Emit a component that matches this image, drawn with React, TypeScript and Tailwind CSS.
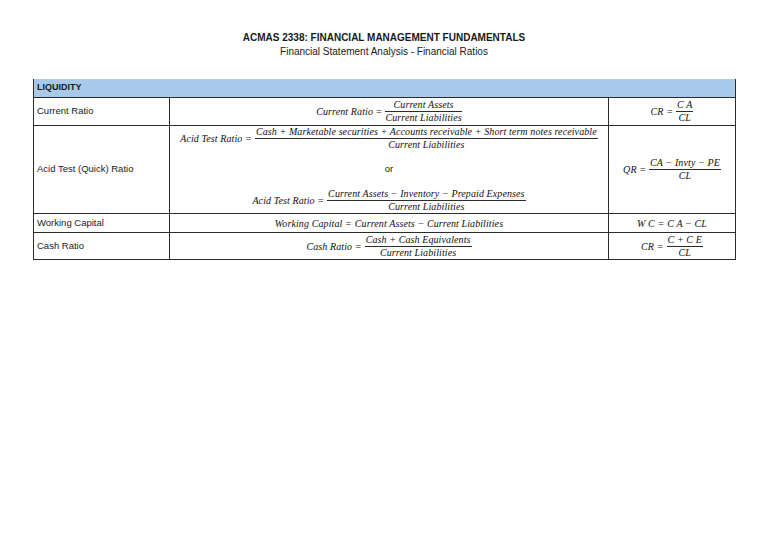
import React from 'react';

// Financial ratios sheet – liquidity table

const sans = { fontFamily: '"Liberation Sans", Arial, sans-serif' };
const math = { fontFamily: '"Liberation Serif", "Times New Roman", serif' };

const Frac: React.FC<{ num: string; den: string }> = ({ num, den }) => (
    <span className="inline-flex flex-col items-center">
        <span className="px-[1px] leading-[10px] whitespace-nowrap">{num}</span>
        <span className="my-[1px] h-px w-full bg-[#2b2b2b]" />
        <span className="leading-[10px] whitespace-nowrap">{den}</span>
    </span>
);

const Formula: React.FC<{ lhs: string; num?: string; den?: string; rhs?: string }> = ({ lhs, num, den, rhs }) => (
    <span className="inline-flex items-center gap-[3px] italic text-[10px] tracking-[0.1px] text-[#111]" style={math}>
        <span className="whitespace-nowrap">{lhs} =</span>
        {num && den ? <Frac num={num} den={den} /> : <span className="whitespace-nowrap">{rhs}</span>}
    </span>
);

interface Row {
    label: string;
    height: string;
    main: React.ReactNode;
    short: React.ReactNode;
}

const rows: Row[] = [
    {
        label: 'Current Ratio',
        height: 'h-[28px]',
        main: <Formula lhs="Current Ratio" num="Current Assets" den="Current Liabilities" />,
        short: <Formula lhs="CR" num="C A" den="CL" />,
    },
    {
        label: 'Acid Test (Quick) Ratio',
        height: 'h-[88px]',
        main: (
            <div className="flex h-full flex-col items-center justify-between py-[1px]">
                <Formula
                    lhs="Acid Test Ratio"
                    num="Cash + Marketable securities + Accounts receivable + Short term notes receivable"
                    den="Current Liabilities"
                />
                <span className="text-[9.5px] text-[#222]" style={sans}>or</span>
                <Formula
                    lhs="Acid Test Ratio"
                    num="Current Assets  −  Inventory  −  Prepaid Expenses"
                    den="Current Liabilities"
                />
            </div>
        ),
        short: <Formula lhs="QR" num="CA − Invty − PE" den="CL" />,
    },
    {
        label: 'Working Capital',
        height: 'h-[19px]',
        main: <Formula lhs="Working Capital" rhs="Current Assets − Current Liabilities" />,
        short: <Formula lhs="W C" rhs="C A − CL" />,
    },
    {
        label: 'Cash Ratio',
        height: 'h-[27px]',
        main: <Formula lhs="Cash Ratio" num="Cash + Cash Equivalents" den="Current Liabilities" />,
        short: <Formula lhs="CR" num="C + C E" den="CL" />,
    },
];

const App: React.FC = () => {
    return (
        <div className="min-h-[543px] w-[768px] bg-white text-[#1a1a1a]" style={sans}>
            <div className="pt-[32px] text-center">
                <div className="text-[10px] font-bold leading-[12px]">ACMAS 2338: FINANCIAL MANAGEMENT FUNDAMENTALS</div>
                <div className="mt-[2px] text-[10px] leading-[12px]">Financial Statement Analysis - Financial Ratios</div>
            </div>

            <div className="ml-[33px] mt-[21px] w-[703px] border-x border-[#2b2b2b]">
                <div className="flex h-[19px] items-center border-b border-[#2b2b2b] bg-[#a8c9ea] pl-[3px] text-[9px] font-bold">
                    LIQUIDITY
                </div>
                {rows.map((row) => (
                    <div key={row.label} className={`flex border-b border-[#2b2b2b] ${row.height}`}>
                        <div className="flex w-[136px] shrink-0 items-center border-r border-[#2b2b2b] pl-[3px] text-[9.5px]">
                            {row.label}
                        </div>
                        <div className="flex w-[439px] shrink-0 items-center justify-center border-r border-[#2b2b2b]">
                            {row.main}
                        </div>
                        <div className="flex flex-1 items-center justify-center">{row.short}</div>
                    </div>
                ))}
            </div>
        </div>
    );
};

export default App;
